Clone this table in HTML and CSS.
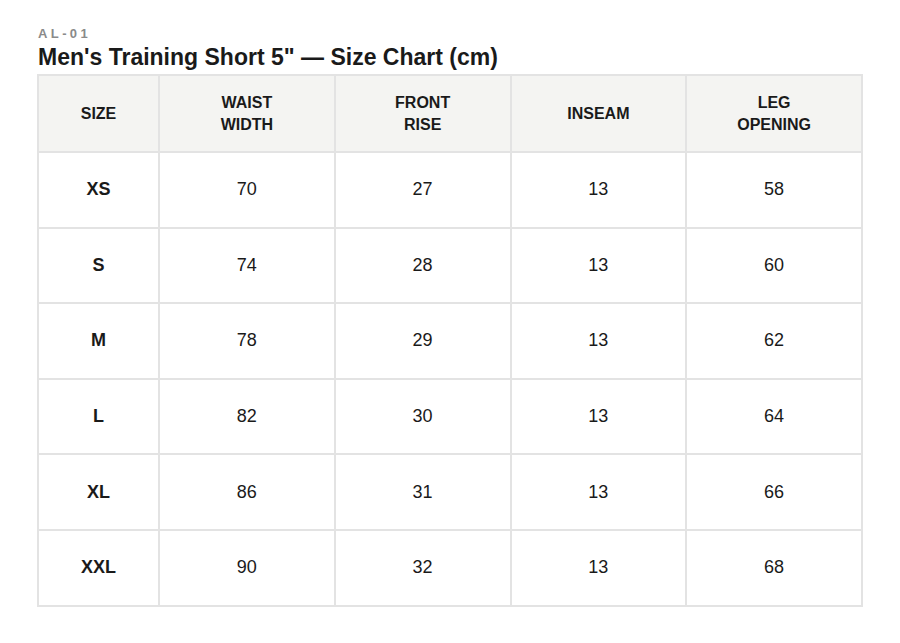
FILE: index.html
```html
<!DOCTYPE html>
<html>
<head>
<meta charset="utf-8">
<link rel="stylesheet" href="styles.css">
</head>
<body>
<div class="page">
  <div class="code">AL-01</div>
  <h1 class="title">Men's Training Short 5" — Size Chart (cm)</h1>
  <table class="chart">
    <thead>
      <tr>
        <th class="c-size">SIZE</th>
        <th class="c-num">WAIST<br>WIDTH</th>
        <th class="c-num">FRONT<br>RISE</th>
        <th class="c-num">INSEAM</th>
        <th class="c-num">LEG<br>OPENING</th>
      </tr>
    </thead>
    <tbody>
      <tr><td class="size">XS</td><td>70</td><td>27</td><td>13</td><td>58</td></tr>
      <tr><td class="size">S</td><td>74</td><td>28</td><td>13</td><td>60</td></tr>
      <tr><td class="size">M</td><td>78</td><td>29</td><td>13</td><td>62</td></tr>
      <tr><td class="size">L</td><td>82</td><td>30</td><td>13</td><td>64</td></tr>
      <tr><td class="size">XL</td><td>86</td><td>31</td><td>13</td><td>66</td></tr>
      <tr><td class="size">XXL</td><td>90</td><td>32</td><td>13</td><td>68</td></tr>
    </tbody>
  </table>
</div>
</body>
</html>
```
FILE: styles.css
```css
html, body {
  margin: 0;
  padding: 0;
  background: #ffffff;
}
body {
  font-family: "Liberation Sans", Arial, sans-serif;
  color: #1a1a1a;
}
.page {
  padding: 26px 37px 0 37px;
}
.code {
  font-size: 13px;
  font-weight: bold;
  letter-spacing: 3.4px;
  color: #8a8a8a;
  line-height: 15px;
  margin-left: 1px;
}
.title {
  margin: 2px 0 3px 1px;
  font-size: 23px;
  line-height: 28px;
  font-weight: bold;
  color: #1a1a1a;
}
.chart {
  border-collapse: collapse;
  width: 826px;
  table-layout: fixed;
  border: 2px solid #e3e3e3;
}
.chart th, .chart td {
  border: 2px solid #e3e3e3;
  text-align: center;
  vertical-align: middle;
  padding: 0;
}
.chart th {
  background: #f4f4f2;
  font-size: 16px;
  line-height: 22px;
  font-weight: bold;
  height: 75px;
}
.chart td {
  font-size: 18px;
  height: 73.6px;
}
.chart td.size {
  font-weight: bold;
}
.c-size { width: 119px; }
```
